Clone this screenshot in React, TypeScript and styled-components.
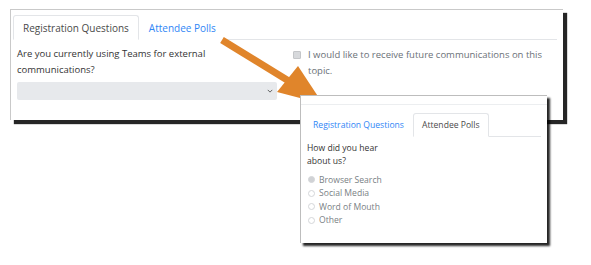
import React from "react";
import styled, { createGlobalStyle } from "styled-components";

const GlobalStyle = createGlobalStyle`
  html, body {
    margin: 0;
    padding: 0;
    background: #ffffff;
  }
  body {
    font-family: "Open Sans", "Noto Sans", Arial, sans-serif;
    color: #333;
  }
`;

const App: React.FC = () => {
  const sources = ["Browser Search", "Social Media", "Word of Mouth", "Other"];

  return (
    <>
      <GlobalStyle />
      <Stage>
        <MainWindow>
          <Tabs>
            <Tab active>Registration Questions</Tab>
            <Tab>Attendee Polls</Tab>
          </Tabs>
          <FormBody>
            <Question>
              <Label>Are you currently using Teams for external communications?</Label>
              <Select>
                <Chevron viewBox="0 0 8 5">
                  <path d="M1 1l3 3 3-3" fill="none" stroke="#555" strokeWidth="1.2" />
                </Chevron>
              </Select>
            </Question>
            <CheckRow>
              <CheckBox />
              <CheckText>I would like to receive future communications on this topic.</CheckText>
            </CheckRow>
          </FormBody>
        </MainWindow>

        <Arrow viewBox="0 0 591 265" width="591" height="265">
          <line x1="222" y1="40" x2="292" y2="83" stroke="#E0852B" strokeWidth="7" strokeLinecap="butt" />
          <polygon points="298,66 277,92 323,104" fill="#E0852B" />
        </Arrow>

        <PollWindow>
          <TopRule />
          <Tabs small>
            <Tab small>Registration Questions</Tab>
            <Tab small active>Attendee Polls</Tab>
          </Tabs>
          <PollBody>
            <PollQuestion>How did you hear<br />about us?</PollQuestion>
            {sources.map((s, i) => (
              <RadioRow key={s}>
                <Radio checked={i === 0} />
                <span>{s}</span>
              </RadioRow>
            ))}
          </PollBody>
        </PollWindow>
      </Stage>
    </>
  );
};

export default App;

// Styled

const Stage = styled.div`
  position: relative;
  width: 591px;
  height: 265px;
  padding: 9px 0 0 10px;
  box-sizing: border-box;
  overflow: hidden;
`;

const MainWindow = styled.div`
  width: 553px;
  height: 111px;
  box-sizing: border-box;
  background: #fff;
  border: 1px solid #c9c9c9;
  border-right: none;
  border-bottom: none;
  box-shadow: 4px 4px 1px rgba(0, 0, 0, 0.85);
`;

const Tabs = styled.div<{ small?: boolean }>`
  display: flex;
  align-items: flex-end;
  margin: ${({ small }) => (small ? "8px 6px 0 3px" : "5px 6px 0 2px")};
  border-bottom: 1px solid #e3e5e8;
`;

const Tab = styled.div<{ active?: boolean; small?: boolean }>`
  height: ${({ small }) => (small ? "24px" : "25px")};
  box-sizing: border-box;
  display: flex;
  align-items: center;
  padding: ${({ small }) => (small ? "0 8px" : "0 9px")};
  margin-bottom: -1px;
  font-size: ${({ small }) => (small ? "8.6px" : "10px")};
  color: ${({ active }) => (active ? "#4a4a4a" : "#2f86f6")};
  background: #fff;
  border: 1px solid ${({ active }) => (active ? "#e3e5e8" : "transparent")};
  border-bottom-color: ${({ active }) => (active ? "#fff" : "transparent")};
  border-radius: 3px 3px 0 0;
  white-space: nowrap;
`;

const FormBody = styled.div`
  display: grid;
  grid-template-columns: 260px 1fr;
  column-gap: 16px;
  padding: 6px 6px 0 6px;
`;

const Question = styled.div`
  display: flex;
  flex-direction: column;
`;

const Label = styled.div`
  font-size: 9.5px;
  line-height: 16px;
  color: #333;
  width: 230px;
`;

const Select = styled.div`
  margin-top: 4px;
  height: 18px;
  background: #e7e9ec;
  border-radius: 2px;
  display: flex;
  align-items: center;
  justify-content: flex-end;
  padding-right: 4px;
`;

const Chevron = styled.svg`
  width: 6px;
  height: 4px;
`;

const CheckRow = styled.div`
  display: flex;
  align-items: flex-start;
  gap: 7px;
  padding-top: 1px;
`;

const CheckBox = styled.div`
  flex: none;
  width: 6px;
  height: 6px;
  margin-top: 4px;
  background: #d7d9dc;
  border: 1px solid #c4c6c9;
  border-radius: 1px;
`;

const CheckText = styled.div`
  font-size: 9.5px;
  line-height: 16px;
  color: #6b7178;
  width: 240px;
`;

const Arrow = styled.svg`
  position: absolute;
  left: 0;
  top: 0;
  pointer-events: none;
`;

const PollWindow = styled.div`
  position: absolute;
  left: 300px;
  top: 95px;
  width: 247px;
  height: 148px;
  box-sizing: border-box;
  background: #fff;
  border: 1px solid #bdbdbd;
  border-right: none;
  border-bottom: none;
  box-shadow: 3px 3px 2px rgba(0, 0, 0, 0.85);
`;

const TopRule = styled.div`
  height: 8px;
  border-bottom: 1px solid #eceef0;
`;

const PollBody = styled.div`
  padding: 5px 6px 0 6px;
  font-size: 8.6px;
`;

const PollQuestion = styled.div`
  line-height: 13px;
  color: #333;
  margin-bottom: 5px;
`;

const RadioRow = styled.div`
  display: flex;
  align-items: center;
  gap: 4px;
  height: 13.5px;
  color: #7a7f85;
  padding-left: 1px;
`;

const Radio = styled.span<{ checked?: boolean }>`
  width: 5px;
  height: 5px;
  border-radius: 50%;
  border: 1px solid #d4d6d9;
  background: ${({ checked }) => (checked ? "#d0d2d5" : "#fff")};
`;
